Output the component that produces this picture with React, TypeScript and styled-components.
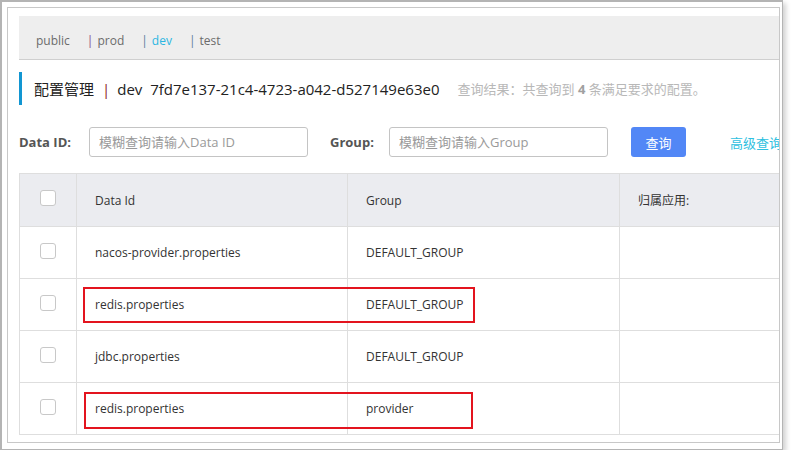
import React from 'react';
import styled, { createGlobalStyle } from 'styled-components';

const GlobalStyle = createGlobalStyle`
    html, body {
        margin: 0;
        padding: 0;
        background: #ffffff;
    }
    body {
        font-family: 'Open Sans', 'Noto Sans CJK SC', sans-serif;
        color: #333;
    }
`;

const Frame = styled.div`
    width: 783px;
    height: 450px;
    border: 1px solid #b4b4b4;
    border-width: 2px 1px 1px 2px;
    box-sizing: border-box;
    padding: 5px 2px 6px 5px;
    background: #fff;
    box-shadow: 3px 3px 5px rgba(0, 0, 0, 0.18);
`;

const Panel = styled.div`
    height: 100%;
    border: 1px solid #c8c8c8;
    box-sizing: border-box;
    overflow: hidden;
    padding: 8px 0 0 11px;
    display: flex;
    flex-direction: column;
`;

const TabBar = styled.div`
    height: 43px;
    width: 900px;
    box-sizing: content-box;
    background: #eeeeee;
    border-bottom: 1px solid #cfcfcf;
    display: flex;
    align-items: center;
    padding-left: 17px;
    font-size: 12px;
    line-height: 1;
`;

const Tab = styled.span<{ $active?: boolean }>`
    position: relative;
    top: 3px;
    color: ${(p) => (p.$active ? '#2bb6e2' : '#6b6b6b')};
    margin-right: 17px;
    white-space: nowrap;
`;

const Sep = styled.span<{ $tone: string }>`
    color: ${(p) => p.$tone};
    margin-right: 4px;
`;

const Title = styled.div`
    margin-top: 12px;
    height: 33px;
    border-left: 3px solid #1296d2;
    padding-left: 12px;
    display: flex;
    align-items: center;
    white-space: nowrap;
`;

const TitleMain = styled.span`
    font-size: 15px;
    color: #222;
`;

const TitleBar = styled.span`
    color: #8b1c1c;
    margin: 0 7px 0 8px;
`;

const ResultNote = styled.span`
    margin-left: 18px;
    font-size: 13px;
    color: #b8b8b8;
    b {
        color: #a0a0a0;
    }
`;

const SearchRow = styled.div`
    margin-top: 22px;
    height: 30px;
    display: flex;
    align-items: center;
    white-space: nowrap;
`;

const Label = styled.label<{ $w: number; $gap?: number }>`
    width: ${(p) => p.$w}px;
    margin-left: ${(p) => p.$gap ?? 0}px;
    flex: none;
    font-size: 13px;
    font-weight: 700;
    color: #555;
`;

const Input = styled.input`
    width: 219px;
    height: 30px;
    box-sizing: border-box;
    border: 1px solid #c4c4c4;
    border-radius: 3px;
    padding: 0 9px;
    font-family: inherit;
    font-size: 13px;
    flex: none;
    &::placeholder {
        color: #9a9a9a;
    }
`;

const Button = styled.button`
    margin-left: 23px;
    width: 55px;
    height: 30px;
    border: none;
    border-radius: 3px;
    background: #5287f6;
    color: #fff;
    font-family: inherit;
    font-size: 13px;
    flex: none;
`;

const AdvLink = styled.a`
    margin-left: 44px;
    font-size: 13px;
    color: #2ec0e0;
    flex: none;
`;

const TableWrap = styled.div`
    margin-top: 16px;
    position: relative;
`;

const Table = styled.table`
    border-collapse: collapse;
    table-layout: fixed;
    width: 820px;
    font-size: 12px;
    color: #333;
`;

const Col = styled.col<{ $w: number }>`
    width: ${(p) => p.$w}px;
`;

const Th = styled.th`
    height: 52px;
    background: #ebecf0;
    border: 1px solid #dedede;
    text-align: left;
    font-weight: 400;
    padding: 0 0 0 18px;
`;

const Td = styled.td`
    height: 51px;
    border: 1px solid #dedede;
    padding: 0 0 0 18px;
    white-space: nowrap;
`;

const CheckCell = styled.td<{ $head?: boolean }>`
    border: 1px solid #dedede;
    background: ${(p) => (p.$head ? '#ebecf0' : '#fff')};
    padding: 0;
    text-align: center;
`;

const Check = styled.span`
    display: inline-block;
    width: 16px;
    height: 16px;
    box-sizing: border-box;
    border: 1px solid #c8c8c8;
    border-radius: 3px;
    background: #fff;
    vertical-align: middle;
    margin-top: -6px;
`;

const Mark = styled.div<{ $x: number; $y: number; $w: number; $h: number }>`
    position: absolute;
    left: ${(p) => p.$x}px;
    top: ${(p) => p.$y}px;
    width: ${(p) => p.$w}px;
    height: ${(p) => p.$h}px;
    border: 2px solid #e3141e;
    box-sizing: border-box;
`;

const rows = [
    { id: 'nacos-provider.properties', group: 'DEFAULT_GROUP' },
    { id: 'redis.properties', group: 'DEFAULT_GROUP' },
    { id: 'jdbc.properties', group: 'DEFAULT_GROUP' },
    { id: 'redis.properties', group: 'provider' }
];

export default function App() {
    return (
        <>
            <GlobalStyle />
            <Frame>
                <Panel>
                    <TabBar>
                        <Tab>public</Tab>
                        <Tab>
                            <Sep $tone="#874a87">|</Sep>prod
                        </Tab>
                        <Tab $active>
                            <Sep $tone="#5b7b9b">|</Sep>dev
                        </Tab>
                        <Tab>
                            <Sep $tone="#5b7b9b">|</Sep>test
                        </Tab>
                    </TabBar>
                    <Title>
                        <TitleMain>
                            配置管理<TitleBar>|</TitleBar>dev&nbsp;&nbsp;7fd7e137-21c4-4723-a042-d527149e63e0
                        </TitleMain>
                        <ResultNote>
                            查询结果：共查询到 <b>4</b> 条满足要求的配置。
                        </ResultNote>
                    </Title>
                    <SearchRow>
                        <Label $w={70}>Data ID:</Label>
                        <Input placeholder="模糊查询请输入Data ID" />
                        <Label $w={59} $gap={22}>
                            Group:
                        </Label>
                        <Input placeholder="模糊查询请输入Group" />
                        <Button>查询</Button>
                        <AdvLink>高级查询</AdvLink>
                    </SearchRow>
                    <TableWrap>
                        <Table>
                            <colgroup>
                                <Col $w={57} />
                                <Col $w={271} />
                                <Col $w={272} />
                                <Col $w={220} />
                            </colgroup>
                            <thead>
                                <tr>
                                    <CheckCell as="th" $head>
                                        <Check />
                                    </CheckCell>
                                    <Th>Data Id</Th>
                                    <Th>Group</Th>
                                    <Th>归属应用:</Th>
                                </tr>
                            </thead>
                            <tbody>
                                {rows.map((r, i) => (
                                    <tr key={i}>
                                        <CheckCell>
                                            <Check />
                                        </CheckCell>
                                        <Td>{r.id}</Td>
                                        <Td>{r.group}</Td>
                                        <Td />
                                    </tr>
                                ))}
                            </tbody>
                        </Table>
                        <Mark $x={64} $y={114} $w={392} $h={36} />
                        <Mark $x={65} $y={219} $w={389} $h={37} />
                    </TableWrap>
                </Panel>
            </Frame>
        </>
    );
}
